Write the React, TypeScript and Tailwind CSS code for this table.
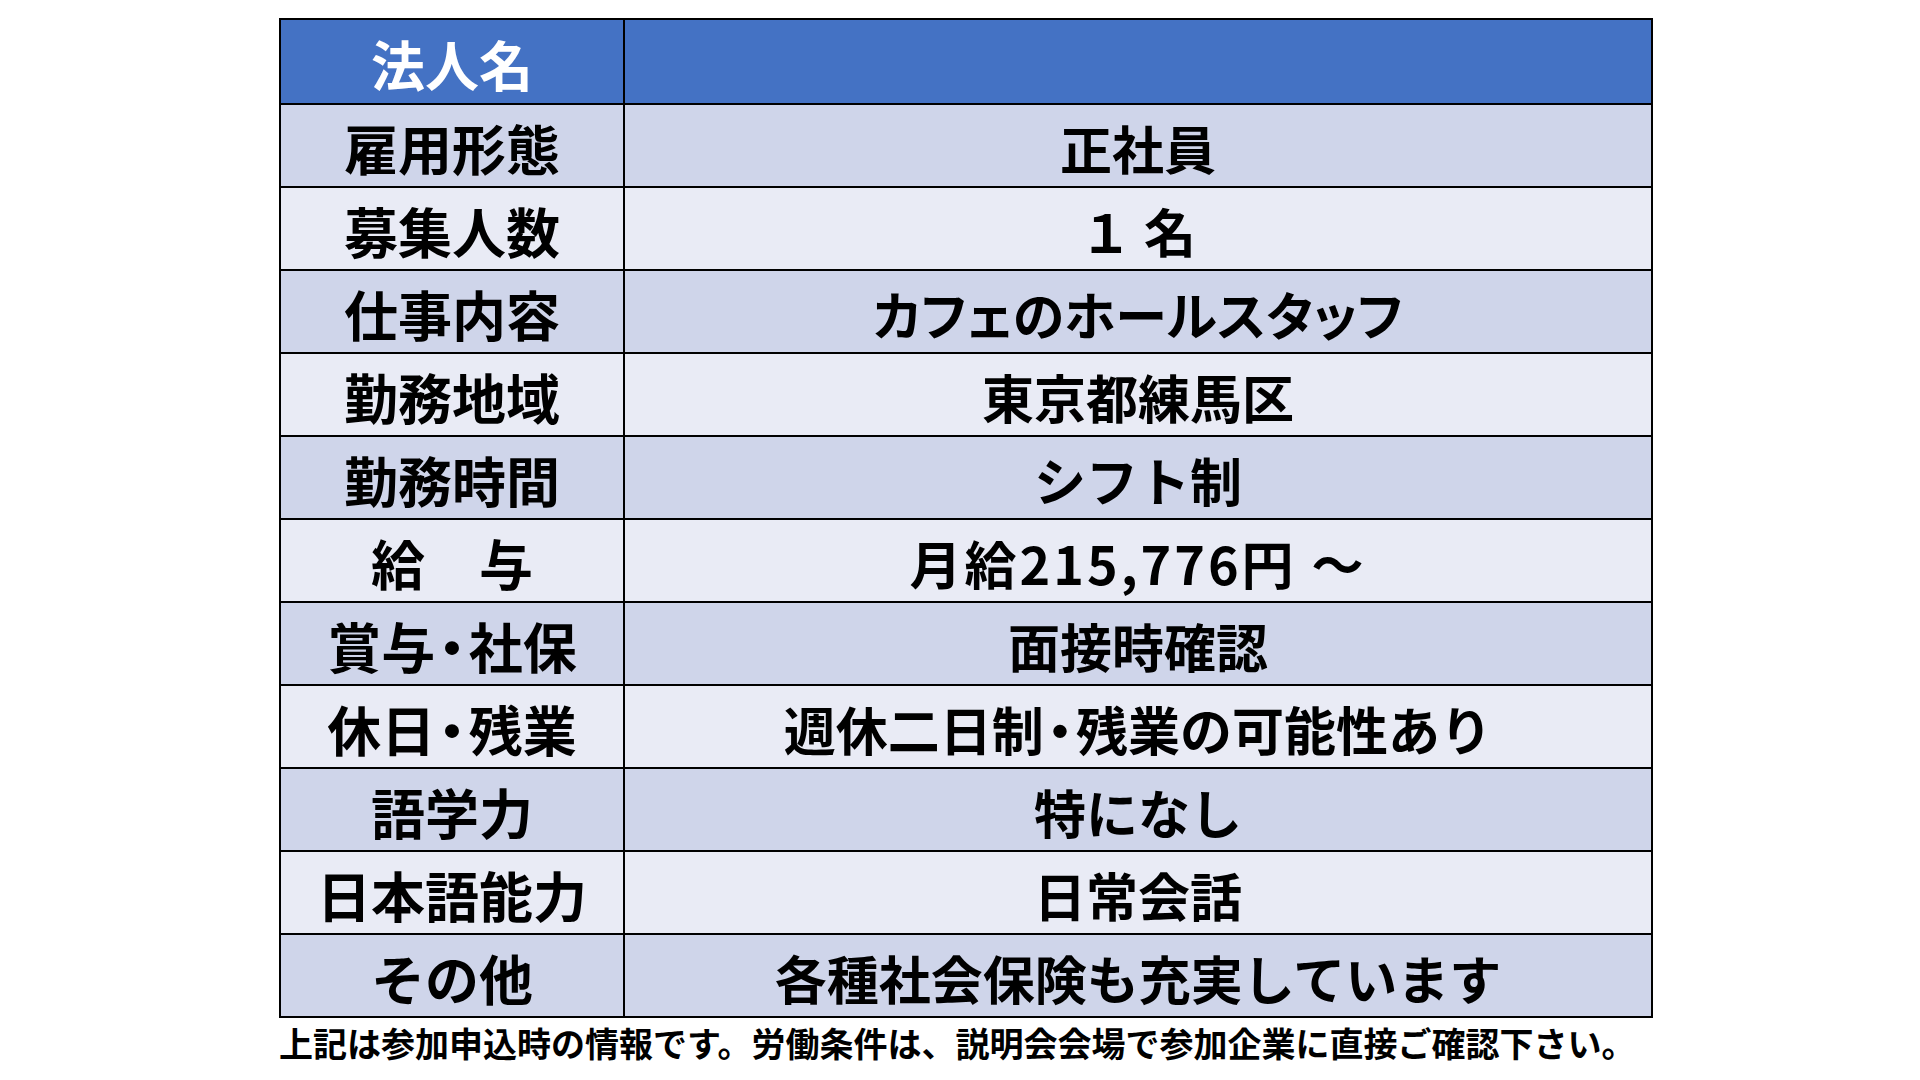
import React from 'react';

const rows: { label: string; value: string; palt?: boolean; wide?: boolean }[] = [
  { label: '雇用形態', value: '正社員' },
  { label: '募集人数', value: '１ 名' },
  { label: '仕事内容', value: 'カフェのホールスタッフ', palt: true },
  { label: '勤務地域', value: '東京都練馬区' },
  { label: '勤務時間', value: 'シフト制' },
  { label: '給　与', value: '月給215,776円 ～', wide: true },
  { label: '賞与・社保', value: '面接時確認' },
  { label: '休日・残業', value: '週休二日制・残業の可能性あり' },
  { label: '語学力', value: '特になし' },
  { label: '日本語能力', value: '日常会話' },
  { label: 'その他', value: '各種社会保険も充実しています' },
];

const font = { fontFamily: '"Noto Sans CJK JP", "Noto Sans", sans-serif' };

// narrow middle dot like the original sheet
const withDots = (text: string) =>
  text.split('・').map((part, i) => (
    <React.Fragment key={i}>
      {i > 0 && <span className="[font-feature-settings:'palt'] mx-[0.06em]">・</span>}
      {part}
    </React.Fragment>
  ));

const App: React.FC = () => {
  return (
    <div className="w-[1920px] h-[1080px] bg-white overflow-hidden" style={font}>
      <div className="ml-[279px] pt-[18px] w-[1374px]">
        <div className="border-2 border-black">
          <div className="grid grid-cols-[344px_1fr] h-[83px] bg-[#4472c4]">
            <div className="border-r-2 border-black flex items-center justify-center pt-1 text-white text-[54px] font-bold leading-none">
              法人名
            </div>
            <div />
          </div>
          {rows.map((row, i) => (
            <div
              key={row.label}
              className={
                'grid grid-cols-[344px_1fr] h-[83px] border-t-2 border-black ' +
                (i % 2 === 0 ? 'bg-[#cfd5ea]' : 'bg-[#e9ebf5]')
              }
            >
              <div className="border-r-2 border-black flex items-center justify-center pt-1 text-black text-[54px] font-bold leading-none whitespace-nowrap">
                {withDots(row.label)}
              </div>
              <div
                className={
                  'flex items-center justify-center pt-1 text-black text-[52px] font-bold leading-none whitespace-nowrap ' +
                  (row.palt ? "[font-feature-settings:'palt'] " : '') +
                  (row.wide ? 'tracking-[3px]' : '')
                }
              >
                {withDots(row.value)}
              </div>
            </div>
          ))}
        </div>
        <p className="mt-[8px] text-[34px] font-bold leading-none text-black whitespace-nowrap">
          上記は参加申込時の情報です。労働条件は、説明会会場で参加企業に直接ご確認下さい。
        </p>
      </div>
    </div>
  );
};

export default App;
